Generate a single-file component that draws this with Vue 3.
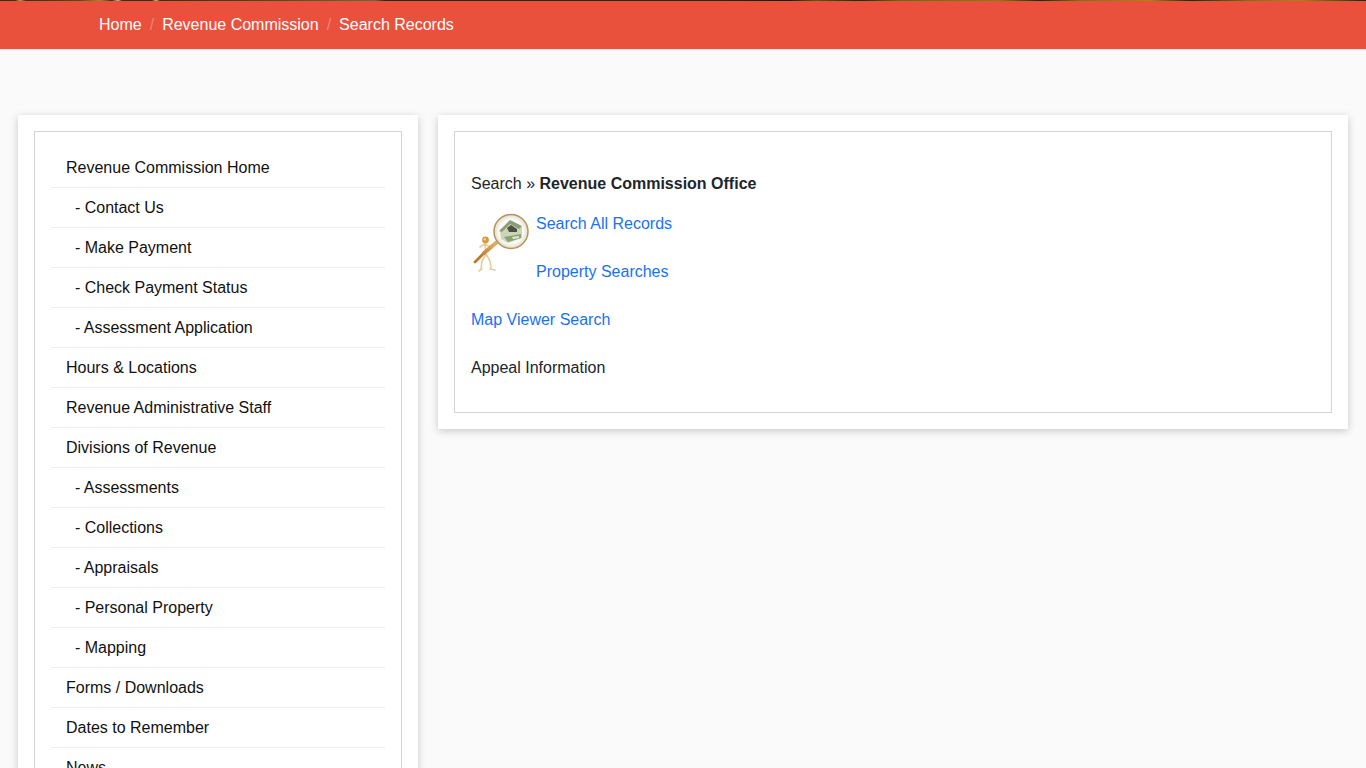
<template>
  <div class="page">
    <header class="topbar">
      <div class="strip"></div>
      <nav class="crumbs">
        <template v-for="(crumb, i) in crumbs" :key="crumb">
          <span v-if="i > 0" class="sep">/</span>
          <a class="crumb" href="#">{{ crumb }}</a>
        </template>
      </nav>
    </header>

    <main class="content">
      <aside class="card">
        <div class="inner">
          <ul class="menu">
            <li v-for="item in menu" :key="item.label" class="menu-item">
              <span v-if="item.sub">&nbsp;&nbsp;- </span>{{ item.label }}
            </li>
          </ul>
        </div>
      </aside>

      <section class="card">
        <div class="inner">
          <p class="title">Search » <b>Revenue Commission Office</b></p>
          <svg class="search-pic" width="60" height="65" viewBox="0 0 60 65">
            <defs>
              <radialGradient id="lens" cx="0.5" cy="0.5" r="0.5">
                <stop offset="0.7" stop-color="#fbfbf6" />
                <stop offset="1" stop-color="#dfdccb" />
              </radialGradient>
              <linearGradient id="handle" x1="0" y1="1" x2="1" y2="0">
                <stop offset="0" stop-color="#c98a3c" />
                <stop offset="1" stop-color="#e2b46c" />
              </linearGradient>
              <filter id="soft" x="-5%" y="-5%" width="110%" height="110%">
                <feGaussianBlur stdDeviation="0.45" />
              </filter>
            </defs>
            <g filter="url(#soft)">
              <!-- figure legs and arm behind the handle -->
              <path d="M9 36 L14 33 L19 36 M14 33 L15 43 M15 43 L11 50 L10 58 M15 43 L19 50 L20 57 M8 60 L11 58 M19 58 L24 59" fill="none" stroke="#e3cd9b" stroke-width="1.6" stroke-linecap="round" />
              <circle cx="14.5" cy="29" r="3.4" fill="#d49a3a" />
              <circle cx="13.8" cy="28.2" r="1.2" fill="#f2d48c" />
              <!-- handle -->
              <path d="M4 51 L13 42" stroke="#bb7a2e" stroke-width="2.8" stroke-linecap="round" />
              <path d="M13 42 L26 31" stroke="url(#handle)" stroke-width="4" stroke-linecap="round" />
              <!-- lens -->
              <circle cx="40" cy="20.5" r="17" fill="url(#lens)" stroke="#b9935f" stroke-width="1.5" />
              <!-- house -->
              <path d="M29 20 L39 10 L51 16 L51 27 L37 32 L30 28 Z" fill="#ccd4b6" />
              <path d="M28 20 L39 9 L51 15 L48 18 L39 13 L31 21 Z" fill="#8e9a78" />
              <path d="M36 17 L40 14 L46 18 L46 21 L38 21 Z" fill="#4a5140" />
              <path d="M33 26 L50 23 L50 27 L37 31 Z" fill="#8aa277" />
              <path d="M41 26 L48 25 L48 27 L42 28 Z" fill="#e2e7d4" />
            </g>
          </svg>
          <p class="row"><a href="#">Search All Records</a></p>
          <p class="row"><a href="#">Property Searches</a></p>
          <p class="row"><a href="#">Map Viewer Search</a></p>
          <p class="row">Appeal Information</p>
        </div>
      </section>
    </main>
  </div>
</template>

<script setup>
const crumbs = ['Home', 'Revenue Commission', 'Search Records']

const menu = [
  { label: 'Revenue Commission Home' },
  { label: 'Contact Us', sub: true },
  { label: 'Make Payment', sub: true },
  { label: 'Check Payment Status', sub: true },
  { label: 'Assessment Application', sub: true },
  { label: 'Hours & Locations' },
  { label: 'Revenue Administrative Staff' },
  { label: 'Divisions of Revenue' },
  { label: 'Assessments', sub: true },
  { label: 'Collections', sub: true },
  { label: 'Appraisals', sub: true },
  { label: 'Personal Property', sub: true },
  { label: 'Mapping', sub: true },
  { label: 'Forms / Downloads' },
  { label: 'Dates to Remember' },
  { label: 'News' }
]
</script>

<style>
html,
body {
  margin: 0;
  background: #fafafa;
  overflow-x: hidden;
  scrollbar-width: none;
}
</style>

<style scoped>
.page {
  font-family: "Liberation Sans", Arial, sans-serif;
  font-size: 16px;
  line-height: 24px;
  color: #212529;
  background: #fafafa;
}

.topbar {
  background: #e9513d;
}

.strip {
  height: 1px;
  background: linear-gradient(90deg,
    #5a2012 0, #5a2012 15px, #d89050 20px, #5a2012 26px, #7a3a14 80px, #c07a30 100px, #5a2012 112px,
    #e0b080 118px, #5a2012 122px, #5a2012 152px, #e0b080 156px, #5a2012 160px, #6a3014 240px,
    #8a5a3a 375px, #4a1a10 385px, #4a1a10 700px, #3c0d08 790px, #7a4a14 815px, #3c1a0a 860px,
    #8a5a14 900px, #a86a18 1000px, #3c1a0a 1040px, #a0601a 1080px, #c0781c 1150px, #3c1a0a 1190px,
    #a0601a 1250px, #c0781c 1300px, #3c1a0a 1366px);
}

.crumbs {
  display: flex;
  height: 48px;
  align-items: center;
  padding-left: 99px;
}

.crumb {
  color: #fff;
  text-decoration: none;
}

.sep {
  padding: 0 8px;
  color: rgba(255, 255, 255, 0.3);
}

.content {
  display: grid;
  grid-template-columns: 400px 910px;
  gap: 20px;
  align-items: start;
  padding: 66px 18px 20px;
}

.card {
  background: #fff;
  padding: 16px;
  box-shadow: 0 2px 8px rgba(0, 0, 0, 0.2);
}

.inner {
  border: 1px solid #d4d4d4;
  padding: 16px;
}

.menu {
  list-style: none;
  margin: 0;
  padding: 0;
}

.menu-item {
  height: 31px;
  padding: 8px 15px 0;
  border-bottom: 1px solid #eeeeee;
  color: #111;
}

.title {
  margin: 24px 0 16px;
}

.row {
  margin: 0 0 24px;
}

.row:last-child {
  margin-bottom: 16px;
}

.search-pic {
  float: left;
  margin: -1px 5px 0 0;
}

.row a {
  color: #1a73e8;
  text-decoration: none;
}
</style>
